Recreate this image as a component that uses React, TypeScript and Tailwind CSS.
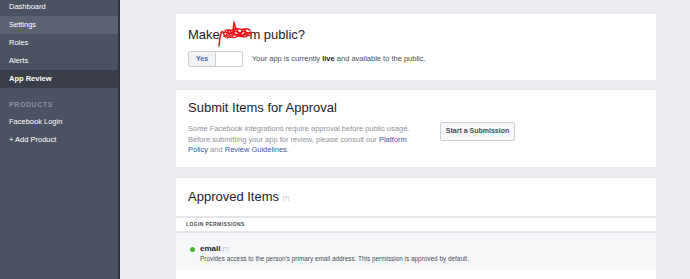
import React from "react";

const NAV = [
  { label: "Dashboard", state: "" },
  { label: "Settings", state: "hover" },
  { label: "Roles", state: "" },
  { label: "Alerts", state: "" },
  { label: "App Review", state: "active" },
];

function Sidebar() {
  return (
    <aside className="w-[120px] shrink-0 bg-[#4b5262] border-r-2 border-[#30353f] text-white">
      <ul className="-mt-[2px]">
        {NAV.map((item) => (
          <li
            key={item.label}
            className={`h-[18px] flex items-center pl-[9px] ${
              item.state === "hover"
                ? "bg-[#5c6270]"
                : item.state === "active"
                ? "bg-[#393e4a] font-bold"
                : ""
            }`}
          >
            {item.label}
          </li>
        ))}
      </ul>
      <div className="mt-[10px] h-[15px] flex items-center pl-[9px] text-[#8a909c] font-bold tracking-[0.6px] text-[7px]">
        PRODUCTS
      </div>
      <div className="h-[18px] flex items-center pl-[9px]">Facebook Login</div>
      <div className="h-[18px] flex items-center pl-[9px]">+ Add Product</div>
    </aside>
  );
}

function Card({ children, className = "" }: { children: React.ReactNode; className?: string }) {
  return <section className={`bg-white w-[480px] ${className}`}>{children}</section>;
}

export default function App() {
  return (
    <div
      className="flex h-[279px] overflow-hidden text-[7.5px] leading-[10.5px]"
      style={{ fontFamily: '"Liberation Sans", Arial, sans-serif' }}
    >
      <Sidebar />

      <main className="flex-1 bg-[#e9ebee] pl-[56px] pt-[14px] flex flex-col gap-[10px]">
        {/* Make app public */}
        <Card className="h-[66px] px-[12px] pt-[13px]">
          <h2 className="text-[13px] leading-[16px] text-[#1d2129] relative">
            Make <span className="inline-block w-[26px]"></span>m public?
            <svg
              className="absolute left-[28px] -top-[7px]"
              width="38"
              height="28"
              viewBox="0 0 38 28"
              fill="none"
            >
              <g stroke="#e8151b" strokeWidth="1.5" strokeLinecap="round" strokeLinejoin="round">
                <path d="M3 26 C4 16 5 10 7 12 C9 16 9 20 11 14 C12 10 13 9 15 12 C16 15 17 16 18 11 C19 7 21 8 22 12 C23 16 25 15 26 11 C27 8 29 9 30 12 C31 14 33 13 35 12" />
                <path d="M7 13 C10 10 14 16 17 12 C20 9 22 15 26 12 C29 10 31 15 34 13" />
                <path d="M8 16 C11 14 14 18 18 15 C21 13 24 18 28 15 C30 13 32 17 34 15" />
                <path d="M9 11 C12 8 15 12 19 9 C22 7 25 11 29 9 C31 8 33 10 34 10" />
                <path d="M17 11 L18 2 L20 10" />
                <path d="M11 18 C14 15 17 19 20 17 C24 14 27 19 31 16" />
                <path d="M12 13 C14 17 16 9 19 14 C21 18 23 10 25 14 C27 18 29 10 32 14" />
              </g>
            </svg>
          </h2>
          <div className="mt-[8px] flex items-center">
            <div className="flex h-[16px] border border-[#ccd0d5] rounded-[2px] overflow-hidden">
              <span className="w-[27px] bg-[#f2f3f5] border-r border-[#ccd0d5] flex items-center justify-center text-[#4267b2] font-bold text-[7px]">
                Yes
              </span>
              <span className="w-[26px] bg-white"></span>
            </div>
            <p className="ml-[9px] text-[#4b4f56]">
              Your app is currently <b className="text-[#1d2129]">live</b> and available to the public.
            </p>
          </div>
        </Card>

        {/* Submit items */}
        <Card className="h-[77px] px-[12px] pt-[10px]">
          <h2 className="text-[13px] leading-[16px] text-[#1d2129]">Submit Items for Approval</h2>
          <div className="mt-[8px] flex items-start">
            <p className="w-[224px] text-[#90949c]">
              Some Facebook integrations require approval before public usage. Before submitting your app for
              review, please consult our <span className="text-[#365899]">Platform</span>{" "}
              <span className="text-[#365899]">Policy</span> and{" "}
              <span className="text-[#365899]">Review Guidelines</span>.
            </p>
            <button className="ml-[28px] -mt-[2px] h-[19px] w-[75px] border border-[#ccd0d5] rounded-[2px] bg-[#f6f7f9] text-[#4b4f56] font-bold text-[7px]">
              Start a Submission
            </button>
          </div>
        </Card>

        {/* Approved items */}
        <Card className="flex-1 mt-[1px]">
          <div className="h-[40px] px-[12px] pt-[11px] border-b-2 border-[#e5e6e9]">
            <h2 className="text-[13px] leading-[16px] text-[#1d2129]">
              Approved Items <span className="text-[6px] text-[#bec2c9] align-middle">[?]</span>
            </h2>
          </div>
          <div className="h-[15px] px-[10px] flex items-center border-b-2 border-[#e5e6e9] text-[5px] font-bold text-[#4b4f56] tracking-[0.4px]">
            LOGIN PERMISSIONS
          </div>
          <div className="bg-[#f6f7f9] h-[37px] pl-[14px] pt-[11px] flex">
            <span className="w-[5px] h-[5px] rounded-full bg-[#42b72a] mt-[3px] mr-[5px]"></span>
            <div>
              <div className="text-[#1d2129] font-bold text-[8px] leading-[10px]">
                email <span className="text-[#bec2c9] font-normal text-[6px]">[?]</span>
              </div>
              <p className="text-[#4b4f56] text-[6.4px] leading-[9px]">
                Provides access to the person's primary email address. This permission is approved by default.
              </p>
            </div>
          </div>
        </Card>
      </main>
    </div>
  );
}
